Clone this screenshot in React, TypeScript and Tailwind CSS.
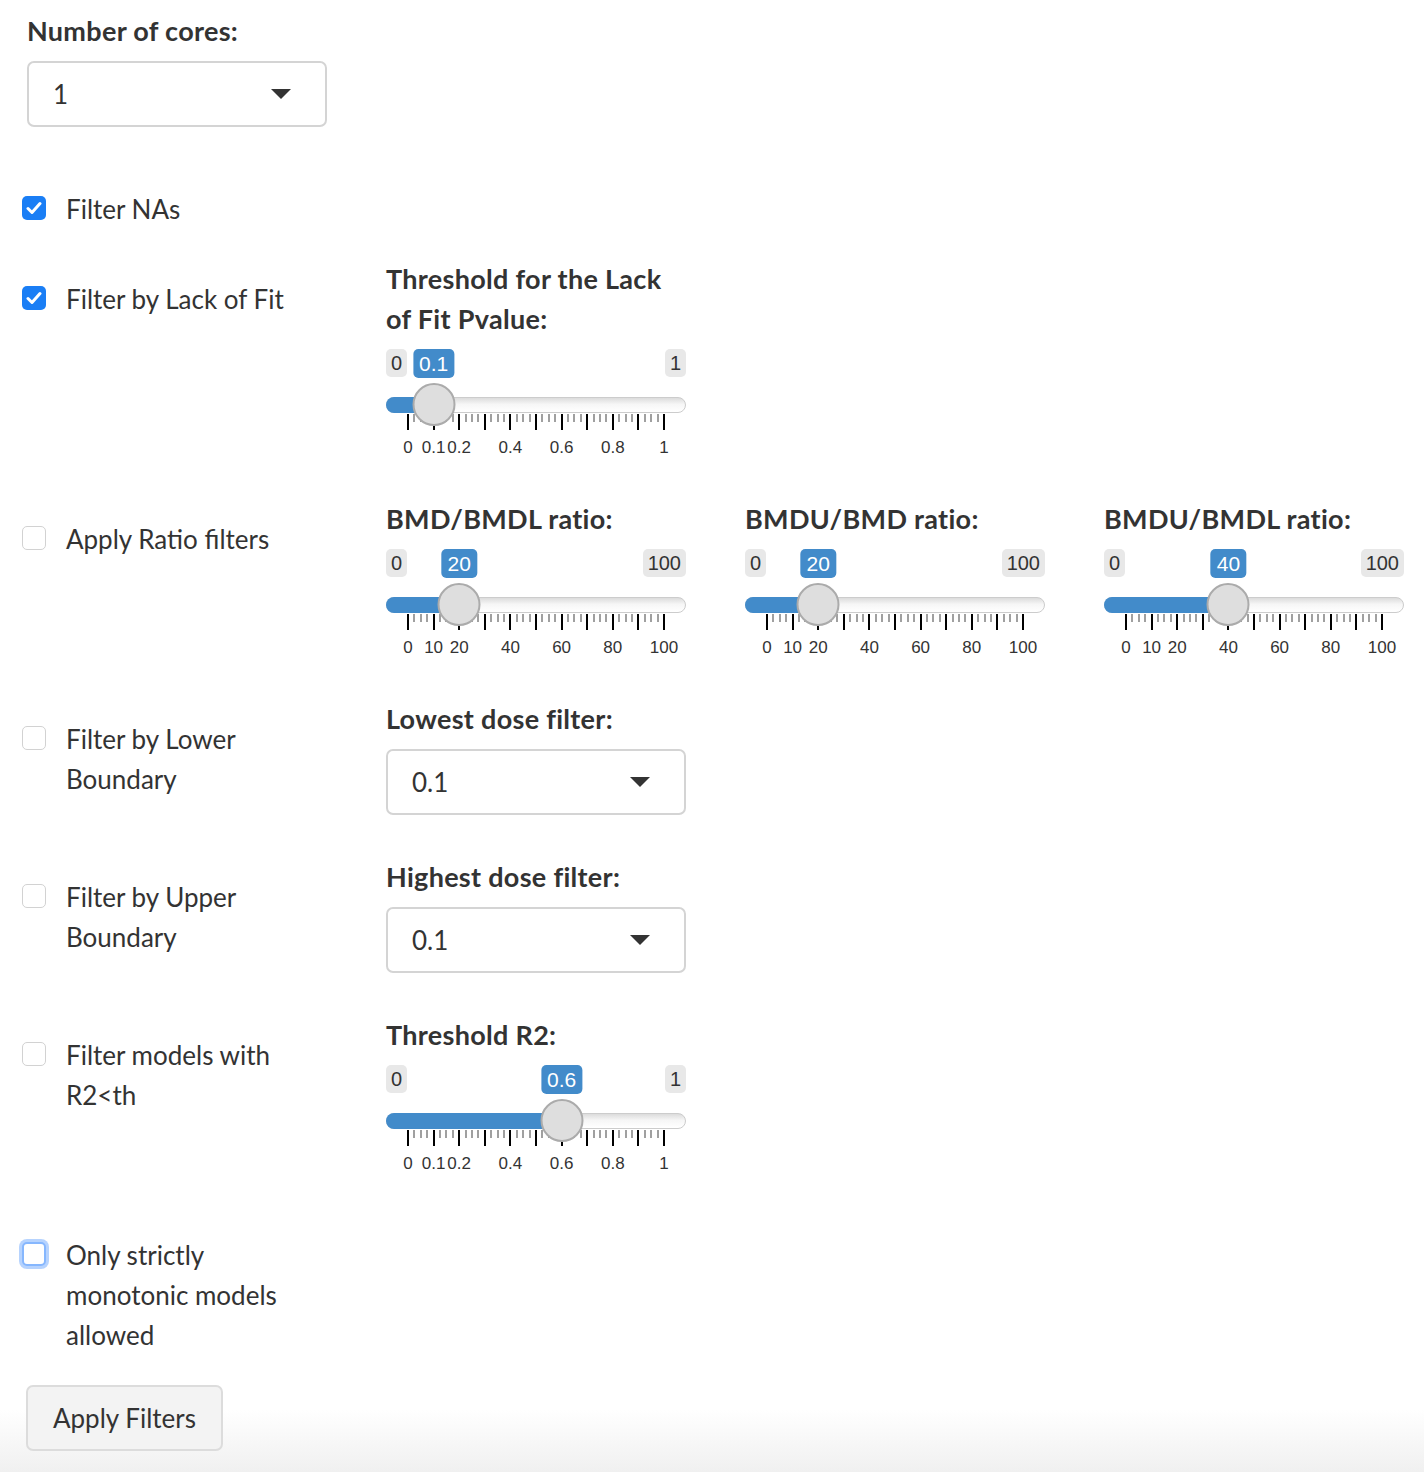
import React from 'react';

const PAD = 22;
const RANGE = 256;

type SliderProps = {
  min: number;
  max: number;
  value: number;
  labels: number[];
};

function pos(v: number, min: number, max: number) {
  return PAD + ((v - min) / (max - min)) * RANGE;
}

function RangeSlider({ min, max, value, labels }: SliderProps) {
  const x = pos(value, min, max);
  const big = Array.from({ length: 11 }, (_, i) => PAD + (i * RANGE) / 10);
  const small: number[] = [];
  for (let i = 0; i < 10; i++) {
    for (let j = 1; j < 4; j++) small.push(PAD + ((i + j / 4) * RANGE) / 10);
  }

  return (
    <div className="relative mt-[10px] h-[112px] w-[300px] font-['Liberation_Sans',Arial,sans-serif]">
      {/* min / max / value badges */}
      <span className="absolute left-0 top-0 flex h-[28px] items-center rounded-[5px] bg-[#e8e8e8] px-[5px] text-[20px] text-[#333]">
        {min}
      </span>
      <span className="absolute right-0 top-0 flex h-[28px] items-center rounded-[5px] bg-[#e8e8e8] px-[5px] text-[20px] text-[#333]">
        {max}
      </span>
      <span
        className="absolute top-0 flex h-[29px] -translate-x-1/2 items-center rounded-[5px] bg-[#428bca] px-[6px] text-[21px] text-white"
        style={{ left: x }}
      >
        {value}
      </span>

      {/* track */}
      <div className="absolute left-0 top-[48px] h-[16px] w-[300px] rounded-full border border-[#cccccc] bg-[linear-gradient(to_bottom,#dcdcdc,#f6f6f6_45%,#ffffff)]" />
      <div
        className="absolute left-0 top-[48px] h-[16px] rounded-l-full bg-[#428bca]"
        style={{ width: x }}
      />

      {/* grid */}
      {small.map((s, i) => (
        <div
          key={'s' + i}
          className="absolute top-[65px] h-[8px] w-[2px] bg-[#a0a0a0]"
          style={{ left: s - 1 }}
        />
      ))}
      {big.map((b, i) => (
        <div
          key={'b' + i}
          className="absolute top-[65px] h-[16px] w-[2px] bg-black"
          style={{ left: b - 1 }}
        />
      ))}
      {labels.map((l) => (
        <span
          key={l}
          className="absolute top-[89px] -translate-x-1/2 text-[17px] leading-[20px] text-[#333]"
          style={{ left: pos(l, min, max) }}
        >
          {l}
        </span>
      ))}

      {/* handle */}
      <div
        className="absolute top-[34px] h-[43px] w-[43px] -translate-x-1/2 rounded-full border-2 border-[#ababab] bg-[#dedede]"
        style={{ left: x }}
      />
    </div>
  );
}

function Select({ value }: { value: string }) {
  return (
    <div className="mt-[10px] flex h-[66px] w-[300px] items-center justify-between rounded-[7px] border-2 border-[#d4d4d4] bg-white pl-[24px] pr-[34px] text-[26px]">
      <span>{value}</span>
      <svg width="20" height="10" viewBox="0 0 20 10">
        <path d="M0 0 L20 0 L10 10 Z" fill="#333" />
      </svg>
    </div>
  );
}

function Check({ checked, focused }: { checked?: boolean; focused?: boolean }) {
  if (checked) {
    return (
      <span className="flex h-[24px] w-[24px] shrink-0 items-center justify-center rounded-[5px] bg-[#1a7ef5]">
        <svg width="16" height="14" viewBox="0 0 16 14">
          <path d="M2 7.5 L6 11.5 L14 2.5" stroke="white" strokeWidth="3" fill="none" strokeLinecap="round" strokeLinejoin="round" />
        </svg>
      </span>
    );
  }
  if (focused) {
    return (
      <span className="block h-[24px] w-[24px] shrink-0 rounded-[5px] border-2 border-[#86b7fe] bg-white shadow-[0_0_0_3px_rgba(13,110,253,0.3)]" />
    );
  }
  return <span className="block h-[24px] w-[24px] shrink-0 rounded-[5px] border-[1.5px] border-[#d2d2d2] bg-white" />;
}

function CheckLabel({ lines, checked, focused }: { lines: string[]; checked?: boolean; focused?: boolean }) {
  return (
    <div className="flex items-start gap-[20px] pl-[22px]">
      <div className="pt-[7px]">
        <Check checked={checked} focused={focused} />
      </div>
      <div className="text-[26px] leading-[40px]">
        {lines.map((l) => (
          <div key={l}>{l}</div>
        ))}
      </div>
    </div>
  );
}

function Heading({ lines }: { lines: string[] }) {
  return (
    <div className="text-[27px] font-bold leading-[40px] tracking-[0.3px]">
      {lines.map((l) => (
        <div key={l}>{l}</div>
      ))}
    </div>
  );
}

export default function App() {
  return (
    <div className="min-h-[1472px] w-full bg-[linear-gradient(to_bottom,#ffffff_1410px,#f0f0f0_1472px)] pt-[11px] font-['Source_Sans_Pro',Lato,sans-serif] text-[#333]">
      {/* Number of cores */}
      <div className="pl-[27px]">
        <Heading lines={['Number of cores:']} />
        <Select value="1" />
      </div>

      {/* Filter NAs */}
      <div className="mt-[62px]">
        <CheckLabel checked lines={['Filter NAs']} />
      </div>

      {/* Lack of fit */}
      <div className="mt-[30px] flex">
        <div className="w-[386px] shrink-0 pt-[20px]">
          <CheckLabel checked lines={['Filter by Lack of Fit']} />
        </div>
        <div>
          <Heading lines={['Threshold for the Lack', 'of Fit Pvalue:']} />
          <RangeSlider min={0} max={1} value={0.1} labels={[0, 0.1, 0.2, 0.4, 0.6, 0.8, 1]} />
        </div>
      </div>

      {/* Ratio filters */}
      <div className="mt-[38px] flex">
        <div className="w-[386px] shrink-0 pt-[20px]">
          <CheckLabel lines={['Apply Ratio filters']} />
        </div>
        <div className="flex gap-[59px]">
          <div>
            <Heading lines={['BMD/BMDL ratio:']} />
            <RangeSlider min={0} max={100} value={20} labels={[0, 10, 20, 40, 60, 80, 100]} />
          </div>
          <div>
            <Heading lines={['BMDU/BMD ratio:']} />
            <RangeSlider min={0} max={100} value={20} labels={[0, 10, 20, 40, 60, 80, 100]} />
          </div>
          <div>
            <Heading lines={['BMDU/BMDL ratio:']} />
            <RangeSlider min={0} max={100} value={40} labels={[0, 10, 20, 40, 60, 80, 100]} />
          </div>
        </div>
      </div>

      {/* Lower boundary */}
      <div className="mt-[38px] flex">
        <div className="w-[386px] shrink-0 pt-[20px]">
          <CheckLabel lines={['Filter by Lower', 'Boundary']} />
        </div>
        <div>
          <Heading lines={['Lowest dose filter:']} />
          <Select value="0.1" />
        </div>
      </div>

      {/* Upper boundary */}
      <div className="mt-[42px] flex">
        <div className="w-[386px] shrink-0 pt-[20px]">
          <CheckLabel lines={['Filter by Upper', 'Boundary']} />
        </div>
        <div>
          <Heading lines={['Highest dose filter:']} />
          <Select value="0.1" />
        </div>
      </div>

      {/* R2 */}
      <div className="mt-[42px] flex">
        <div className="w-[386px] shrink-0 pt-[20px]">
          <CheckLabel lines={['Filter models with', 'R2<th']} />
        </div>
        <div>
          <Heading lines={['Threshold R2:']} />
          <RangeSlider min={0} max={1} value={0.6} labels={[0, 0.1, 0.2, 0.4, 0.6, 0.8, 1]} />
        </div>
      </div>

      {/* Monotonic */}
      <div className="mt-[58px]">
        <CheckLabel focused lines={['Only strictly', 'monotonic models', 'allowed']} />
      </div>

      <div className="mt-[30px] pl-[26px]">
        <button className="h-[66px] rounded-[7px] border-2 border-[#dcdcdc] bg-[#f3f3f3] px-[25px] text-[26px] text-[#333]">
          Apply Filters
        </button>
      </div>
    </div>
  );
}
